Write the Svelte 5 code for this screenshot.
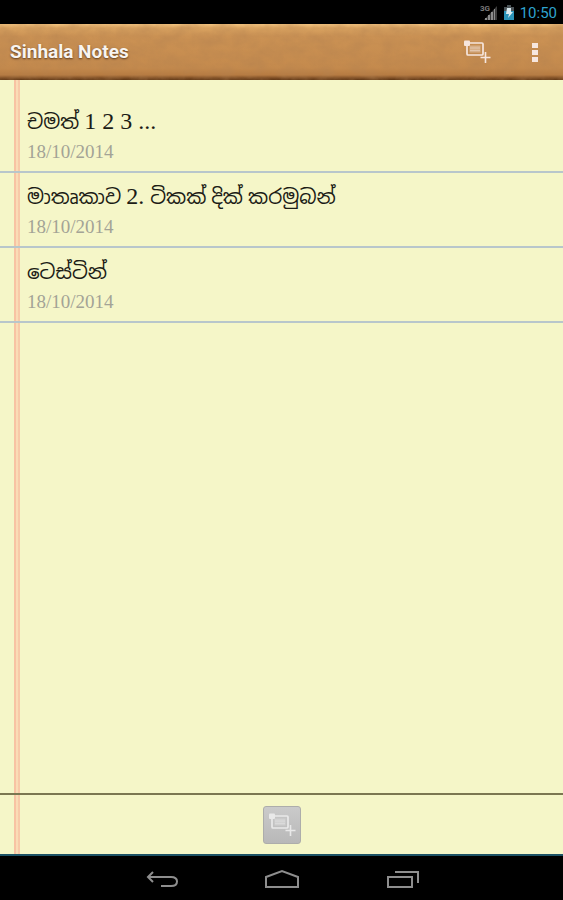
<script lang="ts">
  interface Note {
    id: number;
    title: string;
    date: string;
  }

  const notes: Note[] = [
    { id: 1, title: "චමත් 1 2 3 ...", date: "18/10/2014" },
    { id: 2, title: "මාතෘකාව 2. ටිකක් දික් කරමුබන්", date: "18/10/2014" },
    { id: 3, title: "ටෙස්ටින්", date: "18/10/2014" },
  ];

  // digits and dots are set larger than the Sinhala letters
  const splitRuns = (title: string) => title.split(/([\d.][\d. ]*)/).filter(Boolean);
  const isLatin = (run: string) => /^[\d.]/.test(run);
</script>

{#snippet addNoteIcon()}
  <svg viewBox="0 0 28 26" width="28" height="26" aria-hidden="true">
    <rect x="4" y="4" width="16" height="12" rx="1" fill="none" stroke="currentColor" stroke-width="1.7" />
    <rect x="6.5" y="6.5" width="11" height="7" fill="currentColor" opacity="0.4" />
    <path d="M7 9h10M7 11.5h10" stroke="currentColor" opacity="0.4" />
    <rect x="1" y="1.5" width="6" height="5.5" rx="1" fill="currentColor" />
    <path d="M22.5 13v11M17.500 18.5h10" stroke="currentColor" stroke-width="1.6" />
  </svg>
{/snippet}

<div class="screen">
  <div class="status-bar">
    <svg viewBox="0 0 18 18" width="18" height="18" aria-hidden="true">
      <text class="network" x="0" y="8">3G</text>
      <path d="M17 3v14H4z" fill="#3c3c3c" />
      <path d="M5 15h2v2H5zM8 12h2v5H8zM11 9h2v8h-2zM14 6h1v11h-1z" fill="#8c8c8c" />
    </svg>
    <svg viewBox="0 0 10 16" width="10" height="16" aria-hidden="true">
      <path d="M3 1h4v2h3v5H0V3h3z" fill="#4b5357" />
      <path d="M0 7h10v9H0z" fill="#2b93b8" />
      <path d="M3 4h4v4h2l-5 6 1-4H2z" fill="#dcebf0" />
    </svg>
    <span class="clock">10:50</span>
  </div>

  <header class="app-bar">
    <svg class="leather" aria-hidden="true">
      <filter id="grain" x="0" y="0" width="100%" height="100%">
        <feTurbulence type="fractalNoise" baseFrequency="0.06 0.09" numOctaves="4" seed="3" />
        <feColorMatrix values="0 0 0 0 0.45  0 0 0 0 0.22  0 0 0 0 0.08  1.8 0 0 0 -0.5" />
      </filter>
      <rect width="100%" height="100%" filter="url(#grain)" />
    </svg>
    <h1>Sinhala Notes</h1>
    <button class="bar-button" aria-label="Add note">{@render addNoteIcon()}</button>
    <button class="bar-button more" aria-label="More options">
      <svg viewBox="0 0 6 22" width="6" height="22" aria-hidden="true">
        <path d="M0 2h6v5H0zM0 9h6v5H0zM0 16h6v5H0z" fill="currentColor" />
      </svg>
    </button>
  </header>

  <main class="paper">
    <ul class="notes">
      {#each notes as note (note.id)}
        <li class="note">
          <span class="title" lang="si">{#each splitRuns(note.title) as run}<span class:latin={isLatin(run)}>{run}</span>{/each}</span>
          <span class="date">{note.date}</span>
        </li>
      {/each}
    </ul>
    <div class="toolbar">
      <button class="add-button" aria-label="Add note">{@render addNoteIcon()}</button>
    </div>
  </main>

  <nav class="nav-bar">
    <button aria-label="Back">
      <svg viewBox="0 0 36 24" width="36" height="24" aria-hidden="true">
        <path d="M9 6l-5 5 5 5M4 11h23q6 0 6 4.500t-6 4.500H17" />
      </svg>
    </button>
    <button aria-label="Home">
      <svg viewBox="0 0 36 24" width="36" height="24" aria-hidden="true">
        <path d="M2 21V11l16-6 16 6v10z" />
      </svg>
    </button>
    <button aria-label="Recent apps">
      <svg viewBox="0 0 36 24" width="36" height="24" aria-hidden="true">
        <path d="M4 11h24v10H4zM11 6h23v11" />
      </svg>
    </button>
  </nav>
</div>

<style>
  :global(body) {
    margin: 0;
    background: #000;
  }

  button {
    display: flex;
    align-items: center;
    justify-content: center;
    padding: 0;
    border: 0;
    background: none;
    color: inherit;
    cursor: pointer;
  }

  .screen {
    display: flex;
    flex-direction: column;
    min-height: 100vh;
  }

  .status-bar {
    display: flex;
    align-items: center;
    justify-content: flex-end;
    gap: 6px;
    height: 24px;
    padding-right: 6px;
    background: #000;
  }

  .network {
    fill: #7a7a7a;
    font: bold 8px Roboto, sans-serif;
  }

  .clock {
    padding-top: 2px;
    color: #2ea3cf;
    font: 15px/22px Roboto, sans-serif;
  }

  .app-bar {
    position: relative;
    display: flex;
    align-items: center;
    box-sizing: border-box;
    height: 56px;
    padding-left: 10px;
    background: linear-gradient(#f3c581 0, #d9a360 4px, #cb9254 12px, #c48a4d 44px, #b67b42 51px, #7d4d24 54px, #5b3413 56px);
    color: #f6e6de;
  }

  .leather {
    position: absolute;
    inset: 0;
    width: 100%;
    height: 100%;
    opacity: 0.4;
  }

  h1 {
    position: relative;
    flex: 1;
    margin: 0;
    color: #f8f4f0;
    font: bold 19px/24px Roboto, sans-serif;
    text-shadow: 0 1px 2px rgba(50, 25, 5, 0.7);
  }

  .bar-button {
    position: relative;
    width: 60px;
    height: 56px;
  }

  .more {
    width: 56px;
  }

  .paper {
    display: flex;
    flex: 1;
    flex-direction: column;
    background: linear-gradient(90deg, transparent 14px, #f8c3a3 14px 16px, #fadcb6 16px 18px, #f8c9a8 18px 20px, transparent 20px) #f5f6c8;
  }

  .notes {
    flex: 1;
    margin: 0;
    padding: 18px 0 0;
    list-style: none;
  }

  .note {
    display: flex;
    flex-direction: column;
    box-sizing: border-box;
    height: 75px;
    padding: 8px 27px 0;
    border-bottom: 2px solid #b8c6cb;
    font-family: "Liberation Serif", "Noto Sans Sinhala", serif;
  }

  .title {
    color: #1c1c16;
    font-size: 20px;
    line-height: 32px;
    white-space: pre-wrap;
  }

  .latin {
    font-size: 24px;
    line-height: 24px;
  }

  .date {
    color: #a3a396;
    font-size: 19px;
    line-height: 28px;
  }

  .toolbar {
    display: flex;
    justify-content: center;
    padding: 11px 0 10px;
    border-top: 2px solid #7b7751;
  }

  .add-button {
    width: 38px;
    height: 38px;
    border: 1px solid #adadab;
    border-radius: 3px;
    background: linear-gradient(#cacaca, #b8b8b8);
    color: #e9e9e9;
  }

  .nav-bar {
    display: flex;
    justify-content: center;
    gap: 60px;
    border-top: 2px solid #1c5266;
    background: #000;
  }

  .nav-bar button {
    width: 60px;
    height: 44px;
  }

  .nav-bar path {
    fill: none;
    stroke: #8e8e8e;
    stroke-width: 2;
  }
</style>
